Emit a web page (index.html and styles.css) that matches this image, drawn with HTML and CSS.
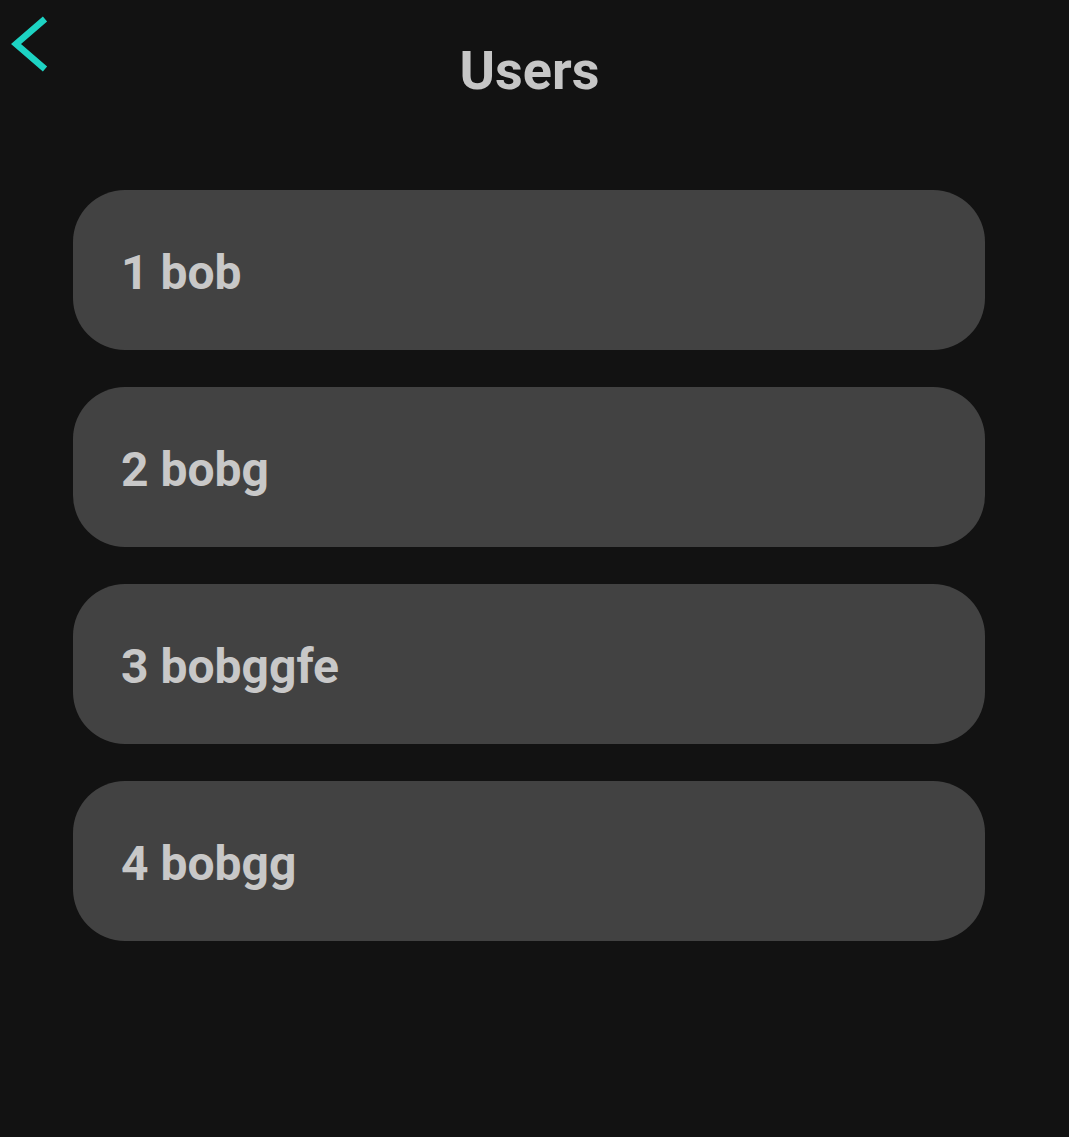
FILE: index.html
```html
<!DOCTYPE html>
<html>
<head>
<meta charset="utf-8">
<link rel="stylesheet" href="styles.css">
</head>
<body>
<div class="app">
  <header class="header">
    <button class="back" aria-label="Back">
      <svg width="50" height="80" viewBox="0 0 50 80"><path d="M45 19 L16 44 L45 69" fill="none" stroke="#1dd3c3" stroke-width="6.5" stroke-linecap="butt" stroke-linejoin="miter"/></svg>
    </button>
    <h1 class="title">Users</h1>
  </header>
  <ul class="list">
    <li class="item">1 bob</li>
    <li class="item">2 bobg</li>
    <li class="item">3 bobggfe</li>
    <li class="item">4 bobgg</li>
  </ul>
</div>
</body>
</html>
```
FILE: styles.css
```css
html, body {
  margin: 0;
  padding: 0;
  background: #121212;
  height: 100%;
}
body {
  font-family: Roboto, "Liberation Sans", sans-serif;
  color: #c8c8c8;
}
.app {
  display: flex;
  flex-direction: column;
}
.header {
  position: relative;
  height: 190px;
  display: flex;
  justify-content: center;
}
.back {
  position: absolute;
  left: 0;
  top: 0;
  background: none;
  border: 0;
  padding: 0;
  cursor: pointer;
}
.back svg { display: block; }
.title {
  margin: 39px 10px 0 0;
  font-size: 54px;
  font-weight: 700;
  line-height: 1.2;
  color: #c6c6c6;
}
.list {
  list-style: none;
  margin: 0 84px 0 73px;
  padding: 0;
  display: flex;
  flex-direction: column;
  gap: 37px;
}
.item {
  height: 160px;
  box-sizing: border-box;
  border-radius: 52px;
  background: #424242;
  display: flex;
  align-items: center;
  padding: 4px 0 0 48px;
  font-size: 48px;
  font-weight: 700;
  color: #c8c8c8;
}
```
